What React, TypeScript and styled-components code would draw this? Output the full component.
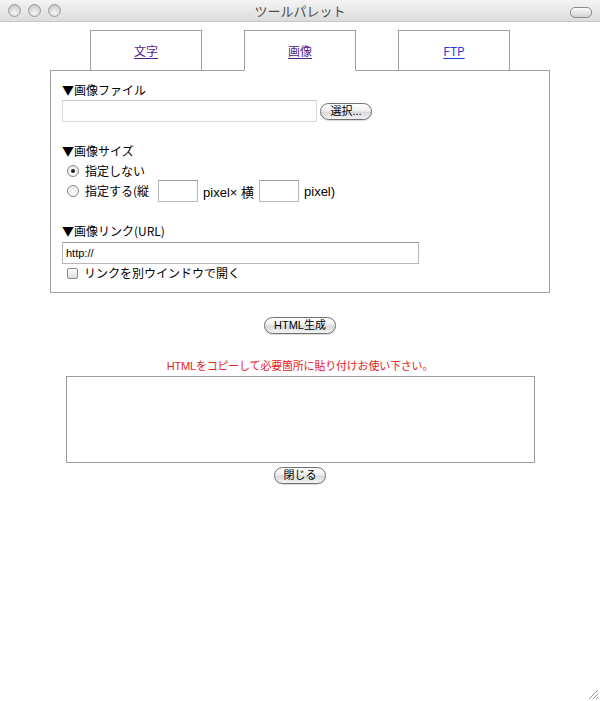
import styled, { createGlobalStyle } from "styled-components";

const GlobalStyle = createGlobalStyle`
  html, body {
    margin: 0;
    padding: 0;
    background: #fff;
  }
  body {
    font-family: "Liberation Sans", "Noto Sans CJK JP", sans-serif;
    color: #000;
  }
`;

const Window = styled.div`
  position: relative;
  width: 600px;
  height: 701px;
  background: #fff;
  overflow: hidden;
`;

const TitleBar = styled.div`
  position: relative;
  height: 22px;
  display: flex;
  align-items: center;
  justify-content: center;
  background: linear-gradient(#f4f4f4, #dcdcdc);
  border-bottom: 1px solid #c8c8c8;
  box-sizing: border-box;
`;

const Lights = styled.div`
  position: absolute;
  left: 8px;
  top: 4px;
  display: flex;
  gap: 7px;
`;

const Light = styled.span`
  width: 13px;
  height: 13px;
  border-radius: 50%;
  box-sizing: border-box;
  border: 1px solid #9a9a9a;
  background: radial-gradient(circle at 50% 70%, #f6f6f6, #cfcfcf 70%, #b8b8b8);
`;

const Pill = styled.span`
  position: absolute;
  right: 8px;
  top: 7px;
  width: 20px;
  height: 9px;
  border-radius: 5px;
  border: 1px solid #8c8c8c;
  background: linear-gradient(#fafafa, #d2d2d2);
`;

const Title = styled.span`
  font-size: 13px;
  color: #4c4c4c;
  font-family: "Noto Sans CJK JP", sans-serif;
`;

const Body = styled.div`
  padding: 8px 50px 0;
  display: flex;
  flex-direction: column;
  align-items: center;
`;

const Tabs = styled.div`
  display: flex;
  gap: 42px;
  position: relative;
  z-index: 1;
`;

const Tab = styled.div<{ $active?: boolean }>`
  width: 112px;
  height: 41px;
  box-sizing: border-box;
  border: 1px solid #a0a0a0;
  border-bottom-color: ${(p) => (p.$active ? "#fff" : "#a0a0a0")};
  background: #fff;
  display: flex;
  align-items: center;
  justify-content: center;
  margin-bottom: -1px;
`;

const TabLink = styled.a<{ $visited?: boolean }>`
  font-size: 12px;
  font-family: "Noto Sans CJK JP", sans-serif;
  color: ${(p) => (p.$visited ? "#54258f" : "#1d3ad8")};
  text-decoration: underline;
  text-underline-offset: 2px;
  cursor: pointer;
`;

const Panel = styled.div`
  width: 500px;
  box-sizing: border-box;
  border: 1px solid #a0a0a0;
  padding: 11px 11px 11px;
  font-size: 12px;
  font-family: "Noto Sans CJK JP", sans-serif;
`;

const Section = styled.div`
  & + & {
    margin-top: 21px;
  }
`;

const Label = styled.div`
  height: 16px;
  line-height: 16px;
`;

const Row = styled.div<{ $top?: number }>`
  display: flex;
  align-items: center;
  gap: 3px;
  margin-top: ${(p) => p.$top ?? 0}px;
`;

const TextBox = styled.div<{ $w: number; $h?: number; $light?: boolean }>`
  width: ${(p) => p.$w}px;
  height: ${(p) => p.$h ?? 22}px;
  box-sizing: border-box;
  border: 1px solid ${(p) => (p.$light ? "#d8d8d8" : "#b8b8b8")};
  border-top-color: ${(p) => (p.$light ? "#c8c8c8" : "#9a9a9a")};
  background: #fff;
  font-family: "Liberation Sans", sans-serif;
  font-size: 11px;
  line-height: 20px;
  padding: 0 3px;
`;

const AquaButton = styled.button<{ $w: number }>`
  width: ${(p) => p.$w}px;
  height: 17px;
  padding: 0;
  border: 1px solid #6f6f6f;
  border-radius: 9px;
  background: linear-gradient(#ffffff, #f0f0f0 45%, #d9d9d9 55%, #f4f4f4);
  font-family: "Liberation Sans", "Noto Sans CJK JP", sans-serif;
  font-size: 11px;
  line-height: 15px;
  color: #000;
  box-shadow: 0 1px 1px rgba(0, 0, 0, 0.15);
`;

const Option = styled.label`
  display: flex;
  align-items: center;
  gap: 6px;
  padding-left: 5px;
  height: 16px;
  line-height: 16px;
`;

const Radio = styled.span<{ $checked?: boolean }>`
  width: 12px;
  height: 12px;
  box-sizing: border-box;
  border-radius: 50%;
  border: 1px solid #8a8a8a;
  background: radial-gradient(circle at 50% 65%, #fff, #e2e2e2);
  display: flex;
  align-items: center;
  justify-content: center;
  &::after {
    content: "";
    display: ${(p) => (p.$checked ? "block" : "none")};
    width: 4px;
    height: 4px;
    border-radius: 50%;
    background: #222;
  }
`;

const Check = styled.span`
  width: 11px;
  height: 11px;
  box-sizing: border-box;
  border-radius: 2px;
  border: 1px solid #8a8a8a;
  background: linear-gradient(#fff, #dedede);
`;

const Unit = styled.span`
  font-family: "Liberation Sans", "Noto Sans CJK JP", sans-serif;
  font-size: 13px;
  margin: 0 2px;
`;

const Paren = styled.span`
  margin-right: 6px;
`;

const Note = styled.div`
  margin-top: 24px;
  display: flex;
  flex-direction: column;
  align-items: center;
`;

const Notice = styled.div`
  margin-top: 25px;
  color: #e8231e;
  font-size: 11px;
  line-height: 14px;
  font-family: "Liberation Sans", "Noto Sans CJK JP", sans-serif;
  letter-spacing: -0.2px;
`;

const Output = styled.div`
  margin-top: 3px;
  width: 469px;
  height: 87px;
  box-sizing: border-box;
  border: 1px solid #9c9c9c;
  background: #fff;
`;

const CloseRow = styled.div`
  margin-top: 2px;
`;

const Grip = styled.svg`
  position: absolute;
  right: 1px;
  bottom: 1px;
`;

export default function App() {
  return (
    <Window>
      <GlobalStyle />
      <TitleBar>
        <Lights>
          <Light />
          <Light />
          <Light />
        </Lights>
        <Title>ツールパレット</Title>
        <Pill />
      </TitleBar>
      <Body>
        <Tabs>
          <Tab>
            <TabLink $visited>文字</TabLink>
          </Tab>
          <Tab $active>
            <TabLink $visited>画像</TabLink>
          </Tab>
          <Tab>
            <TabLink>FTP</TabLink>
          </Tab>
        </Tabs>
        <Panel>
          <Section>
            <Label>▼画像ファイル</Label>
            <Row $top={2}>
              <TextBox $w={255} $light />
              <AquaButton $w={52}>選択...</AquaButton>
            </Row>
          </Section>
          <Section>
            <Label>▼画像サイズ</Label>
            <Row $top={4}>
              <Option>
                <Radio $checked />
                指定しない
              </Option>
            </Row>
            <Row $top={1}>
              <Option>
                <Radio />
                <Paren>指定する(縦</Paren>
              </Option>
              <TextBox $w={40} />
              <Unit>pixel× 横</Unit>
              <TextBox $w={40} />
              <Unit>pixel)</Unit>
            </Row>
          </Section>
          <Section>
            <Label>▼画像リンク(URL)</Label>
            <Row $top={3}>
              <TextBox $w={357} $h={22}>
                http://
              </TextBox>
            </Row>
            <Row $top={1}>
              <Option>
                <Check />
                リンクを別ウインドウで開く
              </Option>
            </Row>
          </Section>
        </Panel>
        <Note>
          <AquaButton $w={72}>HTML生成</AquaButton>
          <Notice>HTMLをコピーして必要箇所に貼り付けお使い下さい。</Notice>
          <Output />
          <CloseRow>
            <AquaButton $w={52}>閉じる</AquaButton>
          </CloseRow>
        </Note>
      </Body>
      <Grip width="12" height="12" viewBox="0 0 12 12">
        <path d="M11 2 L2 11 M11 6 L6 11 M11 9 L9 11" stroke="#9a9a9a" strokeWidth="1" />
      </Grip>
    </Window>
  );
}
